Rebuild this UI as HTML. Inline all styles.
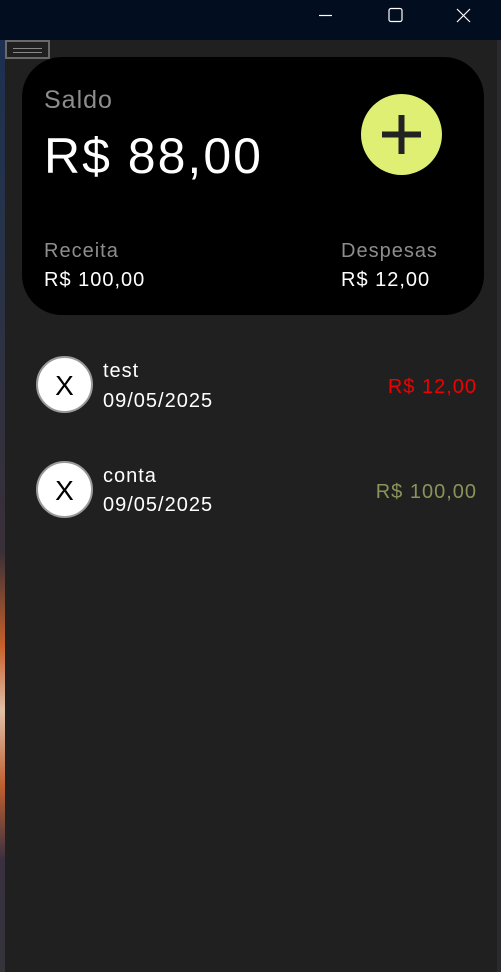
<!DOCTYPE html>
<html><head><meta charset="utf-8"><style>
*{margin:0;padding:0;box-sizing:border-box}
body{width:501px;height:972px;background:#202020;position:relative;overflow:hidden;font-family:"Liberation Sans",sans-serif;color:#fff}
.tb{position:absolute;left:0;top:0;width:501px;height:40px;background:#020d1f}
.ls{position:absolute;left:0;top:40px;width:5px;height:932px;background:linear-gradient(#1d3050 0%,#26334a 20%,#3a3038 55%,#c8602a 65%,#e0c0a8 72%,#c06030 80%,#3a3040 88%,#34343a 100%)}
.rs{position:absolute;right:0;top:40px;width:4px;height:932px;background:#2a2a2e}
.grip{position:absolute;left:5px;top:40px;width:45px;height:19px;border:2px solid #6a6a6a}
.grip:after{content:"";position:absolute;left:6px;top:6px;width:29px;height:3px;border-top:1px solid #888;border-bottom:1px solid #888}
.card{position:absolute;left:22px;top:57px;width:462px;height:258px;background:#000;border-radius:40px}
.t{position:absolute;white-space:nowrap;font-size:20px;letter-spacing:1px}
.plus{position:absolute;left:361px;top:94px;width:81px;height:81px;border-radius:50%;background:#dfef74}
.av{position:absolute;width:57px;height:57px;border-radius:50%;background:#fff;border:2px solid #999;color:#000;font-size:28px;text-align:center;line-height:55px}
</style></head><body>
<div class="tb">
<svg width="501" height="40" style="position:absolute;left:0;top:0">
<line x1="319" y1="15.5" x2="332" y2="15.5" stroke="#fff" stroke-width="1.2"/>
<rect x="389" y="8.5" width="13" height="13" rx="2" fill="none" stroke="#fff" stroke-width="1.2"/>
<path d="M457 9L470 22M470 9L457 22" stroke="#fff" stroke-width="1.2"/>
</svg></div>
<div class="ls"></div><div class="rs"></div>
<div class="grip"></div>
<div class="card"></div>
<div class="t" style="left:44px;top:86px;font-size:25px;color:#8d8d8d">Saldo</div>
<div class="t" style="left:44px;top:127px;font-size:50px;letter-spacing:2px">R$ 88,00</div>
<div class="plus"><svg width="81" height="81"><path d="M40.5 21V60M21 40.5H60" stroke="#222" stroke-width="6"/></svg></div>
<div class="t" style="left:44px;top:240px;color:#8d8d8d">Receita</div>
<div class="t" style="left:44px;top:269px">R$ 100,00</div>
<div class="t" style="left:341px;top:240px;color:#8d8d8d">Despesas</div>
<div class="t" style="left:341px;top:269px">R$ 12,00</div>
<div class="av" style="left:36px;top:356px">X</div>
<div class="t" style="left:103px;top:360px">test</div>
<div class="t" style="left:103px;top:390px">09/05/2025</div>
<div class="t" style="right:24px;top:376px;color:#f00000">R$ 12,00</div>
<div class="av" style="left:36px;top:461px">X</div>
<div class="t" style="left:103px;top:465px">conta</div>
<div class="t" style="left:103px;top:494px">09/05/2025</div>
<div class="t" style="right:24px;top:481px;color:#8b935a">R$ 100,00</div>
</body></html>
